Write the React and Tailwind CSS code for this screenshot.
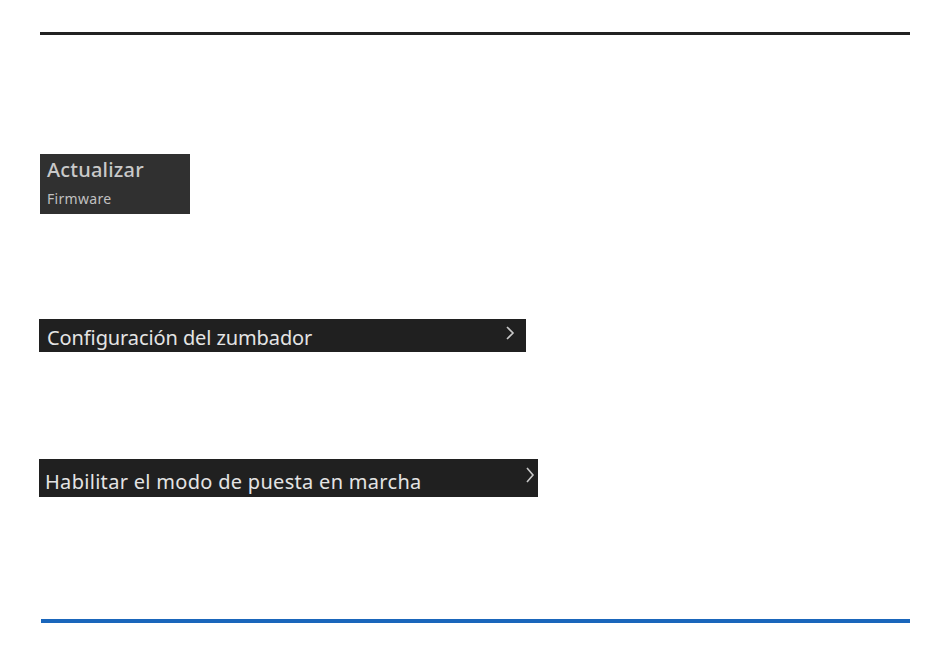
export default function App() {
  return (
    <div className="w-[950px] h-[657px] bg-white flex flex-col" style={{ fontFamily: '"Noto Sans", sans-serif' }}>
      <div className="ml-[40px] mt-[32px] w-[870px] h-[3px] bg-[#222222]" />
      <div className="ml-[40px] mt-[119px] w-[150px] h-[60px] bg-[#303030] flex flex-col px-[7px] pt-[3px]">
        <div className="text-[20px] leading-[26px] text-[#c9c9c9] font-medium tracking-[0.2px]">Actualizar</div>
        <div className="text-[14px] leading-[18px] mt-[7px] text-[#c0c0c0] tracking-[0.3px]">Firmware</div>
      </div>
      <div className="ml-[39px] mt-[105px] w-[487px] h-[33px] bg-[#202020] flex items-center justify-between pl-[8px] pr-[11px]">
        <span className="text-[20px] leading-[26px] text-[#e4e4e4] mt-[4px] tracking-[-0.1px]">Configuración del zumbador</span>
        <svg width="10" height="16" viewBox="0 0 10 16" className="mb-[6px]">
          <path d="M2 2 L8 8 L2 14" stroke="#c8c8c8" strokeWidth="1.6" fill="none" />
        </svg>
      </div>
      <div className="ml-[39px] mt-[107px] w-[499px] h-[38px] bg-[#202020] flex items-center justify-between pl-[6px] pr-[3px]">
        <span className="text-[20px] leading-[26px] text-[#e4e4e4] mt-[8px] tracking-[0.3px]">Habilitar el modo de puesta en marcha</span>
        <svg width="10" height="18" viewBox="0 0 10 18" className="mb-[6px]">
          <path d="M2 2 L8 9 L2 16" stroke="#c8c8c8" strokeWidth="1.6" fill="none" />
        </svg>
      </div>
      <div className="ml-[41px] mt-[122px] w-[869px] h-[4px] bg-[#1a66bb]" />
    </div>
  );
}
